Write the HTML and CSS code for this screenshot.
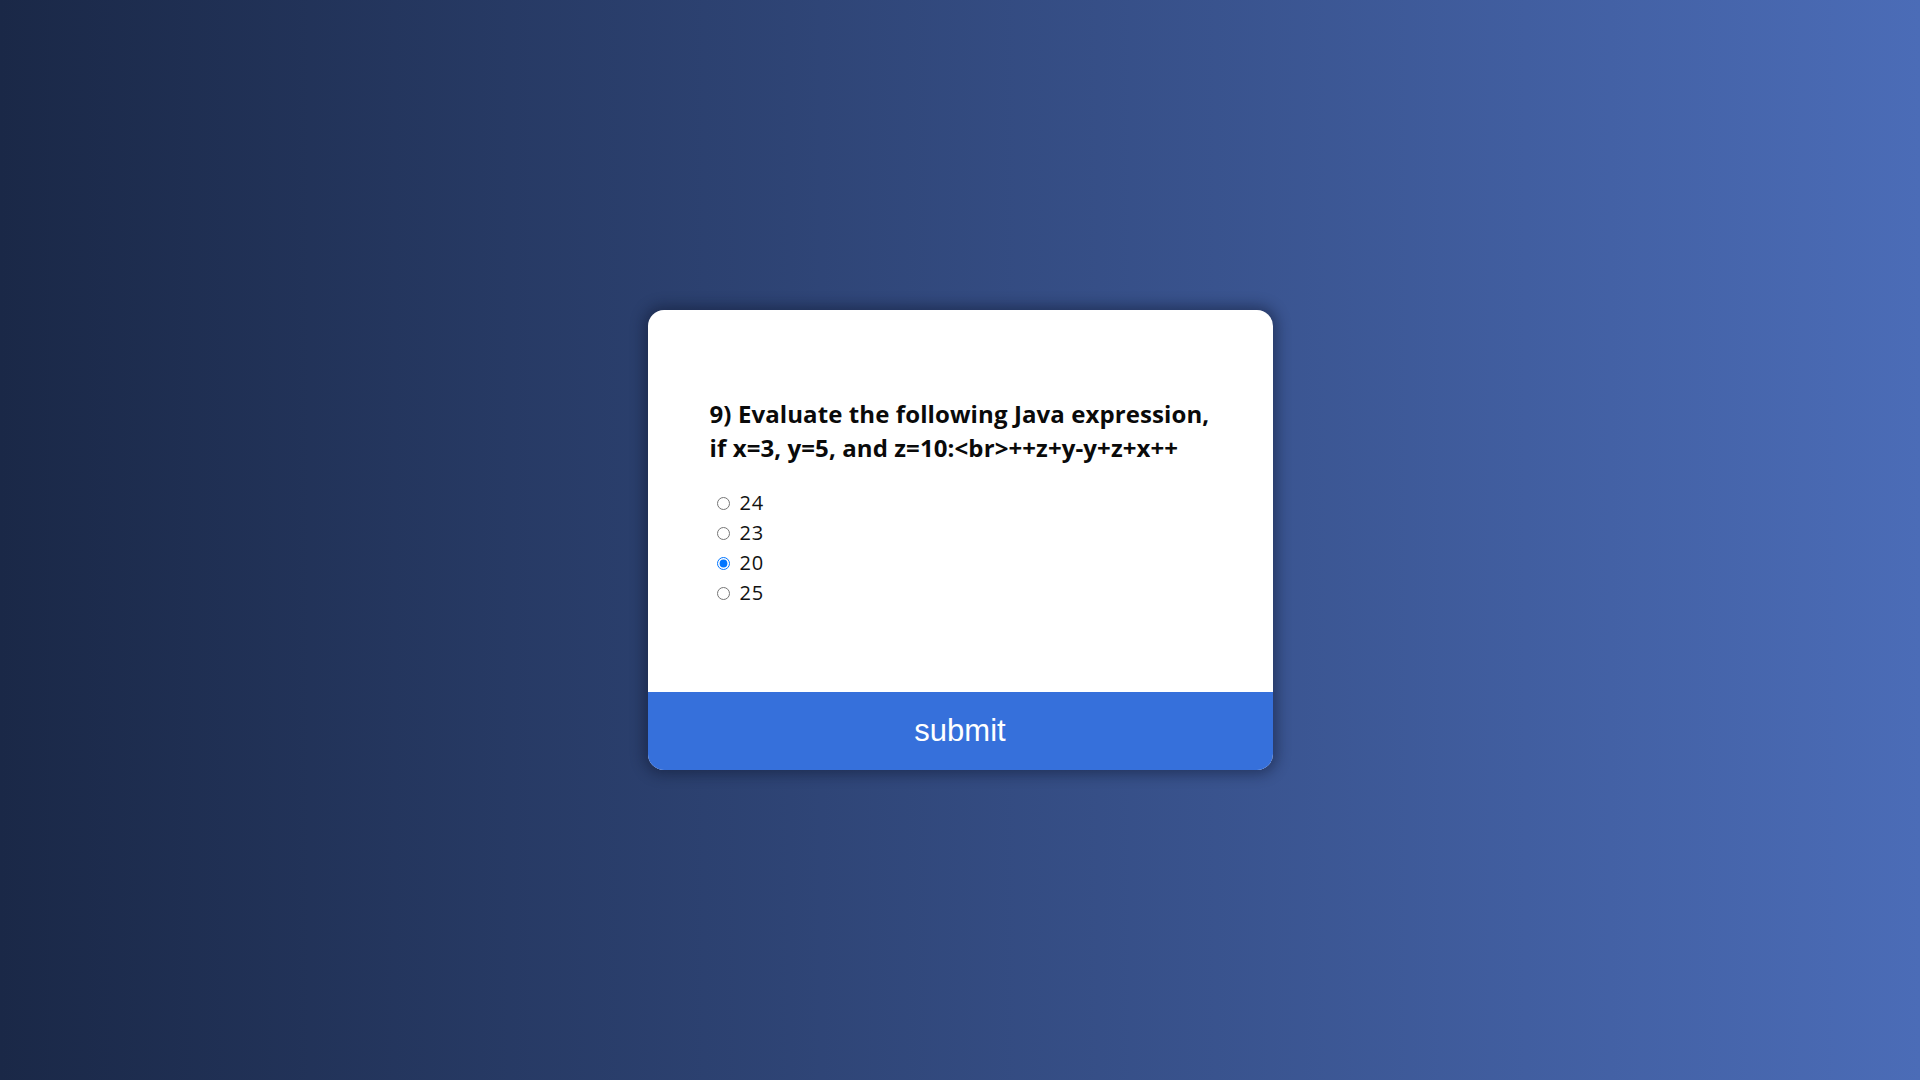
FILE: index.html
```html
<!DOCTYPE html>
<html lang="en">
<head>
<meta charset="UTF-8">
<title>Quiz</title>
<link rel="stylesheet" href="styles.css">
</head>
<body>
  <div class="quiz-container">
    <div class="quiz-header">
      <h2 class="question">9) Evaluate the following Java expression, if x=3, y=5, and z=10:&lt;br&gt;++z+y-y+z+x++</h2>
      <ul class="answers">
        <li class="answer"><input type="radio" name="answer" id="a" class="radio"><label for="a">24</label></li>
        <li class="answer"><input type="radio" name="answer" id="b" class="radio"><label for="b">23</label></li>
        <li class="answer"><input type="radio" name="answer" id="c" class="radio" checked><label for="c">20</label></li>
        <li class="answer"><input type="radio" name="answer" id="d" class="radio"><label for="d">25</label></li>
      </ul>
    </div>
    <button class="submit">submit</button>
  </div>
</body>
</html>
```

FILE: styles.css
```css
* {
  box-sizing: border-box;
}

html, body {
  margin: 0;
  height: 100%;
}

body {
  background: linear-gradient(to right, #1a2847, #4b6cb7);
  font-family: "Open Sans", "DejaVu Sans", sans-serif;
  display: flex;
  align-items: center;
  justify-content: center;
}

.quiz-container {
  width: 625px;
  height: 460px;
  background: #ffffff;
  border-radius: 16px;
  overflow: hidden;
  box-shadow: 0 0 14px 4px rgba(10, 18, 40, 0.45);
  display: flex;
  flex-direction: column;
}

.quiz-header {
  flex: 1;
  padding: 87px 50px 0 62px;
}

.question {
  margin: 0;
  font-size: 24px;
  line-height: 34px;
  font-weight: 700;
  color: #0a0a0a;
  letter-spacing: 0.1px;
}

.answers {
  list-style: none;
  margin: 23px 0 0;
  padding: 0;
}

.answer {
  height: 30px;
  display: flex;
  align-items: center;
  font-size: 20px;
  letter-spacing: 0.8px;
  color: #111;
}

.radio {
  width: 13px;
  height: 13px;
  margin: 0 10px 0 7px;
}

.answer label {
  line-height: 30px;
}

.submit {
  height: 78px;
  width: 100%;
  border: none;
  background: #3670db;
  color: #ffffff;
  font-family: "Liberation Sans", Arial, sans-serif;
  font-size: 31px;
  cursor: pointer;
  padding: 0;
}
```
